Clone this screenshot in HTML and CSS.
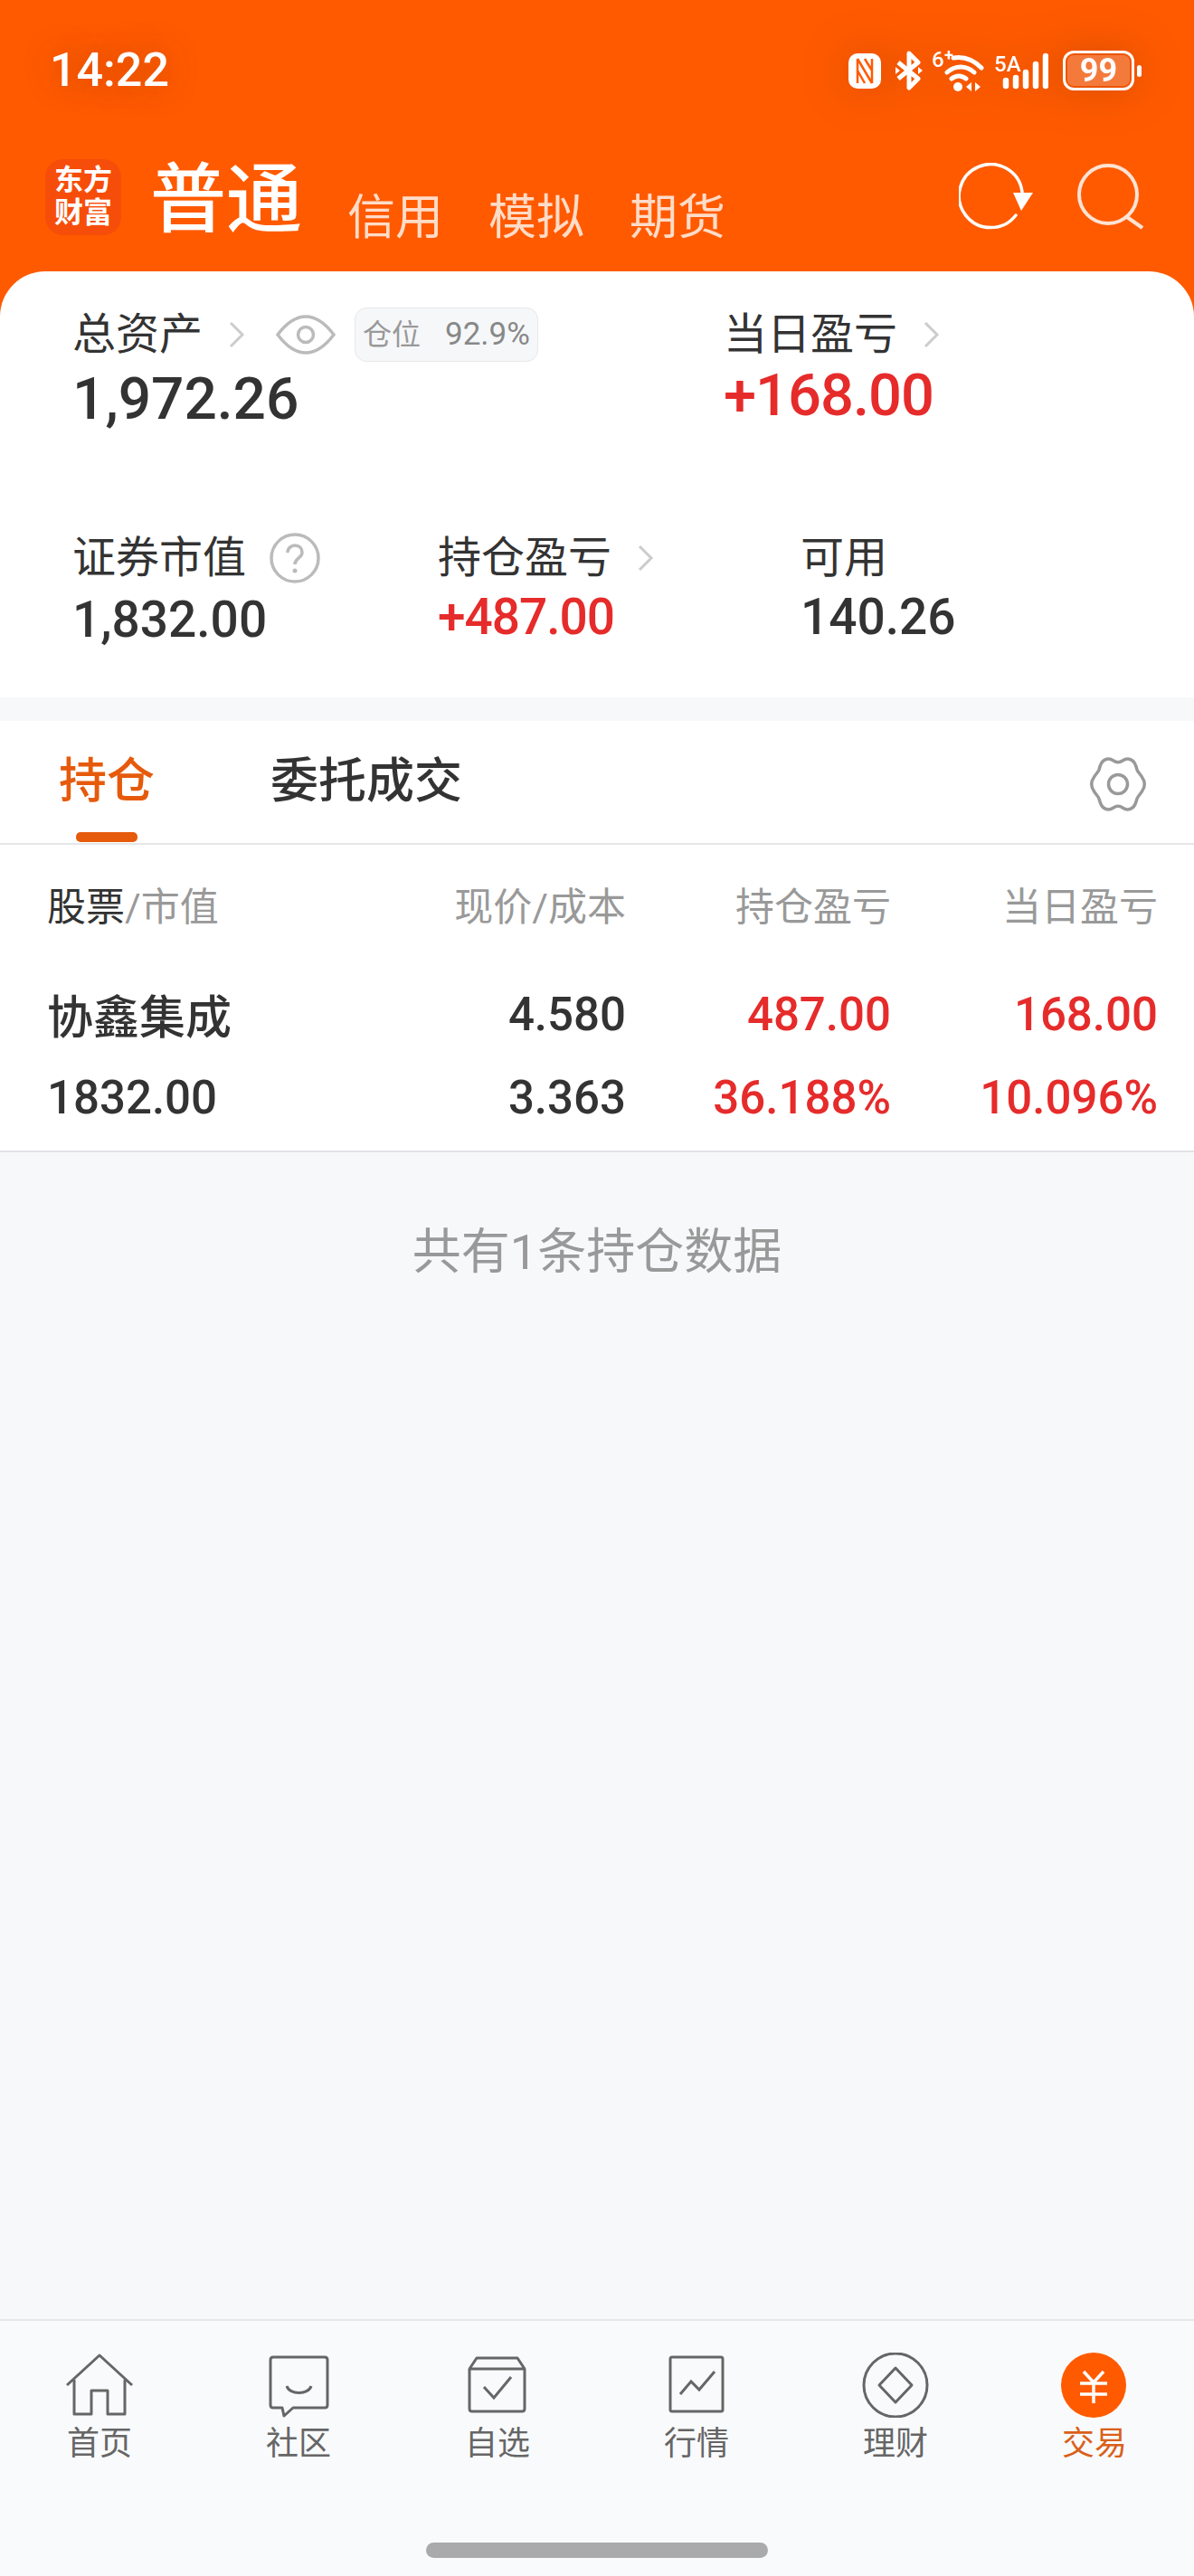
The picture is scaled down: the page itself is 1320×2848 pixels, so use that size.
FILE: index.html
```html
<!DOCTYPE html>
<html lang="zh-CN">
<head>
    <meta charset="UTF-8">
    <meta name="viewport" content="width=device-width, initial-scale=1.0">
    <title>交易</title>
    <link rel="stylesheet" href="styles.css">
</head>
<body>
    <div class="app">
        <header class="top">
            <div class="status-bar">
                <span class="time">14:22</span>
                <div class="status-icons">
                    <svg class="ic-nfc" width="38" height="42" viewBox="0 0 38 42">
                        <rect x="1" y="2" width="36" height="39" rx="10" fill="#fff"/>
                        <path d="M11 8 V35 M11 8 L27 35 M27 8 V35 M11 21 L19 35 M19 8 L27 21" fill="none" stroke="#ff5a00" stroke-width="2.500"/>
                    </svg>
                    <svg class="ic-bt" width="32" height="44" viewBox="0 0 32 44">
                        <path d="M4 13 L26 31 L16 41 L16 3 L26 13 L4 31" fill="none" stroke="#fff" stroke-width="5" stroke-linejoin="round"/>
                        <path d="M26 18 L31 22 L26 26 Z M1 18 L6 22 L1 26 Z" fill="#fff"/>
                    </svg>
                    <svg class="ic-wifi" width="58" height="56" viewBox="0 0 58 56">
                        <text x="0" y="24" class="ic-text">6</text>
                        <text x="14" y="17" class="ic-text-sm">+</text>
                        <path d="M24 14 C36 12 47 17 55 25 M17 30 C26 22 38 22 47 30 M22 37 C27 33 33 33 38 37" fill="none" stroke="#fff" stroke-width="5" stroke-linecap="round"/>
                        <circle cx="29" cy="46" r="5" fill="#fff"/>
                        <path d="M44 41 V51 L38 46 Z M48 41 V51 L54 46 Z" fill="#fff"/>
                    </svg>
                    <svg class="ic-signal" width="60" height="46" viewBox="0 0 60 46">
                        <text x="0" y="24" class="ic-text">5A</text>
                        <path d="M13 34 V40 M24 31 V40 M35 25 V40 M46 16 V40 M57 7 V40" fill="none" stroke="#fff" stroke-width="6.500" stroke-linecap="round"/>
                    </svg>
                    <div class="battery">
                        <div class="battery-body"><span class="battery-level">99</span></div>
                        <div class="battery-tip"></div>
                    </div>
                </div>
            </div>
            <div class="account-bar">
                <div class="logo">
                    <span>东方</span>
                    <span>财富</span>
                </div>
                <div class="account-current">普通</div>
                <div class="account-tabs">
                    <span>信用</span>
                    <span>模拟</span>
                    <span>期货</span>
                </div>
                <div class="account-actions">
                    <svg width="84" height="76" viewBox="0 0 84 76">
                        <path d="M63 58 A35 35 0 1 1 70 32" fill="none" stroke="#fff" stroke-width="3.500" stroke-linecap="round"/>
                        <path d="M60 33 H82 L69 53 Z" fill="#fff"/>
                    </svg>
                    <svg width="76" height="76" viewBox="0 0 76 76">
                        <circle cx="34" cy="35" r="32" fill="none" stroke="#ffe3d4" stroke-width="4"/>
                        <path d="M55 60 L72 72" fill="none" stroke="#ffe3d4" stroke-width="4"/>
                    </svg>
                </div>
            </div>
        </header>

        <section class="assets">
            <div class="assets-row assets-row-main">
                <div class="stat-total">
                    <div class="stat-label">
                        <span>总资产</span>
                        <svg class="chevron" width="18" height="30" viewBox="0 0 18 30"><path d="M2 2 L15 15 L2 28" fill="none" stroke="#ccc" stroke-width="3"/></svg>
                        <svg class="eye" width="66" height="44" viewBox="0 0 66 44">
                            <path d="M2 22 C14 6 24 2 33 2 C42 2 52 6 64 22 C52 38 42 42 33 42 C24 42 14 38 2 22 Z" fill="none" stroke="#bbb" stroke-width="3.500"/>
                            <circle cx="33" cy="22" r="8.500" fill="none" stroke="#bbb" stroke-width="3.500"/>
                        </svg>
                        <div class="position-pill">
                            <span class="position-name">仓位</span>
                            <span class="position-value">92.9%</span>
                        </div>
                    </div>
                    <div class="stat-value stat-value-big">1,972.26</div>
                </div>
                <div class="stat-today">
                    <div class="stat-label">
                        <span>当日盈亏</span>
                        <svg class="chevron" width="18" height="30" viewBox="0 0 18 30"><path d="M2 2 L15 15 L2 28" fill="none" stroke="#ccc" stroke-width="3"/></svg>
                    </div>
                    <div class="stat-value stat-value-big stat-value-up red">+168.00</div>
                </div>
            </div>
            <div class="assets-row">
                <div class="stat-small">
                    <div class="stat-label">
                        <span>证券市值</span>
                        <svg class="help" width="56" height="56" viewBox="0 0 56 56">
                            <circle cx="28" cy="28" r="26" fill="none" stroke="#bbb" stroke-width="3.500"/>
                            <path d="M20 22 C20 17 24 14 28 14 C33 14 36 17 36 22 C36 28 28 28 28 35" fill="none" stroke="#bbb" stroke-width="3.500"/>
                            <circle cx="28" cy="42" r="2.500" fill="#bbb"/>
                        </svg>
                    </div>
                    <div class="stat-value">1,832.00</div>
                </div>
                <div class="stat-small">
                    <div class="stat-label">
                        <span>持仓盈亏</span>
                        <svg class="chevron" width="18" height="30" viewBox="0 0 18 30"><path d="M2 2 L15 15 L2 28" fill="none" stroke="#ccc" stroke-width="3"/></svg>
                    </div>
                    <div class="stat-value stat-value-up red">+487.00</div>
                </div>
                <div class="stat-small">
                    <div class="stat-label"><span>可用</span></div>
                    <div class="stat-value stat-value-up">140.26</div>
                </div>
            </div>
        </section>

        <nav class="tabs">
            <div class="tab tab-active">
                <span class="tab-name">持仓</span>
                <span class="tab-bar"></span>
            </div>
            <div class="tab">
                <span class="tab-name">委托成交</span>
            </div>
            <svg class="gear" width="64" height="60" viewBox="0 0 64 60">
                <path d="M16 4 C20 1 24 2 27 4 C30 6 34 6 37 4 C40 2 44 1 48 4 C51 6 52 10 53 14 C54 17 57 19 59 23 C62 27 62 33 59 37 C57 41 54 43 53 46 C52 50 51 54 48 56 C44 59 40 58 37 56 C34 54 30 54 27 56 C24 58 20 59 16 56 C13 54 12 50 11 46 C10 43 7 41 5 37 C2 33 2 27 5 23 C7 19 10 17 11 14 C12 10 13 6 16 4 Z" fill="none" stroke="#999" stroke-width="3.500"/>
                <circle cx="32" cy="30" r="10.500" fill="none" stroke="#999" stroke-width="3.500"/>
            </svg>
        </nav>

        <section class="holdings">
            <div class="holdings-head">
                <div class="col-name"><span class="dark">股票</span>/市值</div>
                <div class="col">现价/成本</div>
                <div class="col">持仓盈亏</div>
                <div class="col">当日盈亏</div>
            </div>
            <div class="holding-line holding-line-first">
                <div class="col-name stock-name">协鑫集成</div>
                <div class="col">4.580</div>
                <div class="col red">487.00</div>
                <div class="col red">168.00</div>
            </div>
            <div class="holding-line">
                <div class="col-name">1832.00</div>
                <div class="col">3.363</div>
                <div class="col red">36.188%</div>
                <div class="col red">10.096%</div>
            </div>
        </section>

        <main class="list-end">
            <p>共有1条持仓数据</p>
        </main>

        <footer class="bottom-nav">
            <div class="nav-items">
                <div class="nav-item">
                    <svg width="76" height="72" viewBox="0 0 76 72">
                        <path d="M2 36 L38 3 L74 36 M10 30 V68 H29 V42 H47 V68 H66 V30" fill="none" stroke="#666" stroke-width="3" stroke-linejoin="round"/>
                    </svg>
                    <span>首页</span>
                </div>
                <div class="nav-item">
                    <svg width="76" height="72" viewBox="0 0 76 72">
                        <path d="M10 5 H67 Q70 5 70 8 V58 Q70 61 67 61 H32 L22 70 L20 61 H10 Q7 61 7 58 V8 Q7 5 10 5 Z" fill="none" stroke="#666" stroke-width="3" stroke-linejoin="round"/>
                        <path d="M25 37 C28 47 49 47 52 37" fill="none" stroke="#666" stroke-width="3"/>
                    </svg>
                    <span>社区</span>
                </div>
                <div class="nav-item">
                    <svg width="76" height="72" viewBox="0 0 76 72">
                        <path d="M7 18 L15 6 H60 L68 18 M7 18 H68 V62 Q68 65 65 65 H10 Q7 65 7 62 Z" fill="none" stroke="#666" stroke-width="3" stroke-linejoin="round"/>
                        <path d="M23 38 L34 50 L53 27" fill="none" stroke="#666" stroke-width="3"/>
                    </svg>
                    <span>自选</span>
                </div>
                <div class="nav-item">
                    <svg width="76" height="72" viewBox="0 0 76 72">
                        <rect x="9" y="5" width="58" height="60" rx="2" fill="none" stroke="#666" stroke-width="3"/>
                        <path d="M20 46 L32 32 L41 41 L58 21" fill="none" stroke="#666" stroke-width="3"/>
                    </svg>
                    <span>行情</span>
                </div>
                <div class="nav-item">
                    <svg width="76" height="72" viewBox="0 0 76 72">
                        <circle cx="38" cy="36" r="35" fill="none" stroke="#666" stroke-width="3"/>
                        <path d="M38 17 L56 36 L38 55 L20 36 Z" fill="none" stroke="#666" stroke-width="3" stroke-linejoin="round"/>
                    </svg>
                    <span>理财</span>
                </div>
                <div class="nav-item nav-item-active">
                    <svg width="76" height="72" viewBox="0 0 76 72">
                        <circle cx="37" cy="36" r="36" fill="#ff5a00"/>
                        <path d="M26 21 L37 33 L48 21 M22 34 H52 M22 46 H52 M37 33 V56" fill="none" stroke="#fff" stroke-width="3.500"/>
                    </svg>
                    <span>交易</span>
                </div>
            </div>
            <div class="home-bar"></div>
        </footer>
    </div>
</body>
</html>
```

FILE: styles.css
```css
* {
    box-sizing: border-box;
}

body {
    margin: 0;
    font-family: Roboto, 'Noto Sans CJK SC', sans-serif;
    color: #333;
    background-color: #f7f8fa;
}

svg {
    display: block;
    flex-shrink: 0;
}

.app {
    width: 1320px;
    height: 2848px;
    display: flex;
    flex-direction: column;
    overflow: hidden;
    background-color: #ff5a00;
}

.red {
    color: #e62b2b;
}

/* orange header */
.top {
    height: 300px;
    padding: 50px 58px 0 50px;
    color: #fff;
}

.status-bar {
    height: 56px;
    display: flex;
    justify-content: space-between;
    align-items: center;
}

.time {
    margin-left: 5px;
    font-size: 52px;
    font-weight: 500;
    line-height: 56px;
    text-shadow: 0 0 36px rgba(120, 50, 0, 0.45);
}

.status-icons {
    display: flex;
    align-items: center;
    filter: drop-shadow(0 0 24px rgba(120, 50, 0, 0.35));
}

.ic-bt {
    margin-left: 14px;
}

.ic-wifi {
    margin-left: 9px;
}

.ic-signal {
    margin-left: 11px;
}

.ic-text {
    font-family: Roboto, sans-serif;
    font-size: 24px;
    font-weight: 500;
    fill: #fff;
}

.ic-text-sm {
    font-family: Roboto, sans-serif;
    font-size: 18px;
    font-weight: 700;
    fill: #fff;
}

.battery {
    margin-left: 16px;
    display: flex;
    align-items: center;
    gap: 3px;
}

.battery-body {
    width: 79px;
    height: 44px;
    border: 3px solid #fff;
    border-radius: 12px;
    padding: 2px;
}

.battery-level {
    display: block;
    height: 100%;
    border-radius: 7px;
    background-color: #f47a3c;
    font-size: 36px;
    font-weight: 700;
    line-height: 34px;
    text-align: center;
}

.battery-tip {
    width: 5px;
    height: 13px;
    border-radius: 3px;
    background-color: #fff;
}

.account-bar {
    height: 92px;
    margin-top: 66px;
    display: flex;
    align-items: flex-end;
}

.logo {
    width: 84px;
    height: 84px;
    margin-bottom: 4px;
    padding-top: 5px;
    border-radius: 20px;
    background-color: #f74d0a;
    display: flex;
    flex-direction: column;
    align-items: center;
    font-size: 32px;
    font-weight: 700;
    line-height: 36px;
}

.account-current {
    margin-left: 32px;
    margin-bottom: -4px;
    font-size: 84px;
    font-weight: 500;
    line-height: 92px;
}

.account-tabs {
    margin-left: 50px;
    margin-bottom: -9px;
    display: flex;
    gap: 50px;
    color: #ffdcc8;
    font-size: 53px;
    line-height: 64px;
}

.account-actions {
    margin-left: auto;
    margin-right: -5px;
    margin-top: 8px;
    align-self: flex-start;
    display: flex;
    gap: 47px;
}

/* asset summary card */
.assets {
    height: 471px;
    padding: 40px 0 0 80px;
    border-radius: 50px 50px 0 0;
    background-color: #fff;
}

.assets-row {
    display: flex;
}

.assets-row-main {
    height: 247px;
}

.stat-total {
    width: 720px;
}

.stat-small {
    width: 401px;
}

.stat-small:first-child {
    width: 404px;
}

.stat-label {
    height: 60px;
    display: flex;
    align-items: center;
    font-size: 48px;
    line-height: 60px;
}

.chevron {
    margin-left: 29px;
}

.eye {
    margin-left: 34px;
    margin-top: -1px;
}

.help {
    margin-left: 26px;
}

.position-pill {
    width: 203px;
    height: 60px;
    margin-left: 21px;
    padding-left: 8px;
    border: 1px solid #e8e8ec;
    border-radius: 13px;
    background-color: #f6f7f9;
    display: flex;
    align-items: center;
    gap: 27px;
    color: #888;
}

.position-name {
    font-size: 32px;
    color: #999;
}

.position-value {
    font-size: 35px;
}

.stat-value {
    margin-top: 5px;
    font-size: 55px;
    font-weight: 500;
    line-height: 66px;
    color: #333;
}

.stat-value-big {
    margin-top: 7px;
    font-size: 64px;
    line-height: 70px;
}

.stat-value-up {
    margin-top: 2px;
}

.stat-value.red {
    color: #e62b2b;
    letter-spacing: -1px;
}

.stat-value-big.red {
    font-size: 65px;
    letter-spacing: -1px;
}

/* tabs */
.tabs {
    height: 137px;
    margin-top: 26px;
    padding: 31px 52px 0 65px;
    display: flex;
    gap: 128px;
    background-color: #fff;
    border-bottom: 2px solid #e6e6e8;
    box-shadow: 0 -26px 0 #f7f8fa;
}

.tab {
    display: flex;
    flex-direction: column;
    align-items: center;
}

.tab-name {
    font-size: 53px;
    font-weight: 500;
    line-height: 72px;
}

.tab-bar {
    width: 68px;
    height: 11px;
    margin-top: 20px;
    border-radius: 5px;
    background-color: #e65a0c;
}

.tab-active .tab-name {
    color: #e65a0c;
}

.gear {
    margin-left: auto;
    margin-top: 9px;
}

/* holdings table */
.holdings {
    height: 340px;
    padding: 0 40px 0 52px;
    background-color: #fff;
    border-bottom: 2px solid #e2e3e6;
    font-size: 51px;
    font-weight: 500;
    color: #333;
}

.holdings-head,
.holding-line {
    display: flex;
    align-items: center;
}

.holdings-head {
    height: 130px;
    font-size: 43px;
    font-weight: 400;
    color: #999;
}

.holding-line {
    height: 92px;
}

.holding-line-first {
    margin-top: 11px;
}

.dark {
    color: #333;
}

.col-name {
    width: 345px;
}

.col {
    text-align: right;
    white-space: nowrap;
}

.col:nth-child(2) {
    width: 295px;
}

.col:nth-child(3) {
    width: 293px;
}

.col:nth-child(4) {
    width: 295px;
}

.list-end {
    flex: 1;
    background-color: #f7f8fa;
    text-align: center;
    color: #999;
    font-size: 54px;
}

.list-end p {
    margin: 76px 0 0;
    line-height: 70px;
}

/* bottom navigation */
.bottom-nav {
    height: 284px;
    padding-top: 35px;
    background-color: #f9fafc;
    border-top: 2px solid #e6e7e9;
}

.nav-items {
    display: flex;
}

.nav-item {
    width: 220px;
    display: flex;
    flex-direction: column;
    align-items: center;
    gap: 5px;
    color: #666;
    font-size: 36px;
    line-height: 48px;
}

.nav-item-active {
    color: #d9601a;
}

.home-bar {
    width: 378px;
    height: 17px;
    margin: 85px auto 0;
    border-radius: 9px;
    background-color: #aaaaac;
}
```
